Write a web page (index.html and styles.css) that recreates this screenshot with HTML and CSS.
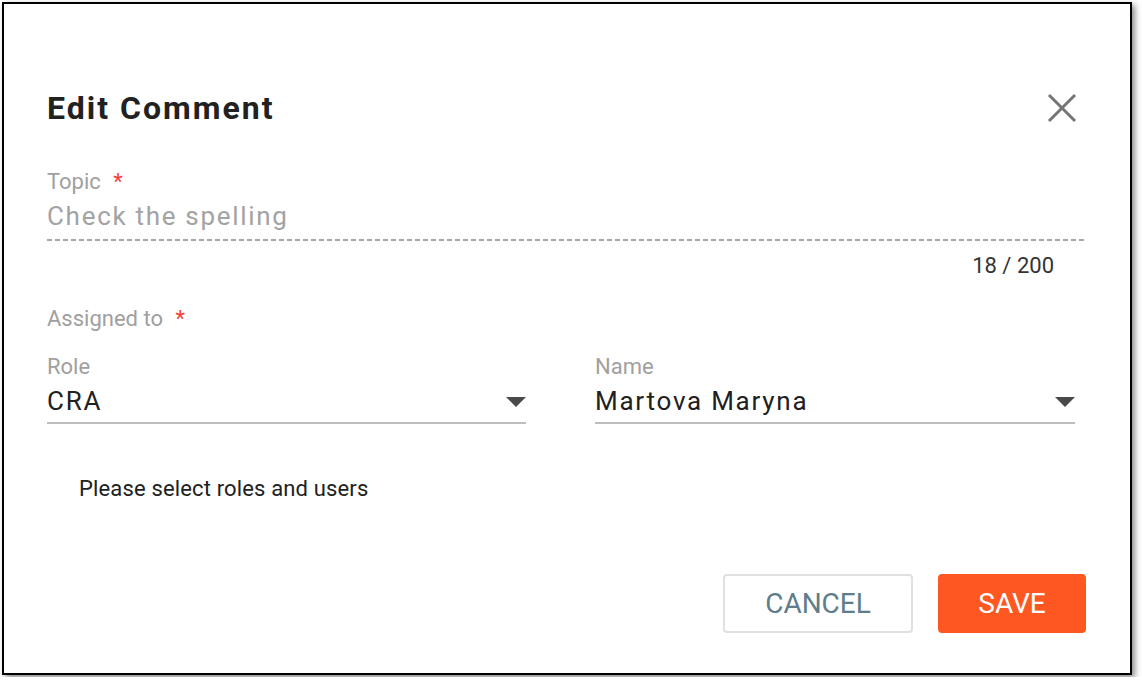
FILE: index.html
```html
<!DOCTYPE html>
<html lang="en">
<head>
<meta charset="utf-8">
<title>Edit Comment</title>
<link rel="stylesheet" href="styles.css">
</head>
<body>
<div class="dialog">
  <div class="header">
    <h1 class="title">Edit Comment</h1>
    <button class="close" aria-label="Close">
      <svg width="48" height="48" viewBox="0 0 48 48"><path d="M11 11L37 37M37 11L11 37" stroke="#757575" stroke-width="3" fill="none"/></svg>
    </button>
  </div>

  <div class="topic">
    <div class="label">Topic <span class="req">*</span></div>
    <div class="topic-value">Check the spelling</div>
    <div class="dash"></div>
    <div class="counter">18 / 200</div>
  </div>

  <div class="label assigned">Assigned to <span class="req">*</span></div>

  <div class="selects">
    <div class="select">
      <div class="label">Role</div>
      <div class="select-value">
        <span>CRA</span>
        <svg class="arrow" width="20" height="10" viewBox="0 0 20 10"><path d="M0 0L10 10L20 0Z" fill="#4a4a4a"/></svg>
      </div>
    </div>
    <div class="select">
      <div class="label">Name</div>
      <div class="select-value">
        <span>Martova Maryna</span>
        <svg class="arrow" width="20" height="10" viewBox="0 0 20 10"><path d="M0 0L10 10L20 0Z" fill="#4a4a4a"/></svg>
      </div>
    </div>
  </div>

  <div class="hint">Please select roles and users</div>

  <div class="actions">
    <button class="btn btn-cancel">CANCEL</button>
    <button class="btn btn-save">SAVE</button>
  </div>
</div>
</body>
</html>
```

FILE: styles.css
```css
html, body {
  margin: 0;
  background: #ffffff;
}
body {
  padding: 2px;
  font-family: Roboto, "Liberation Sans", Arial, sans-serif;
  color: #212121;
}
.dialog {
  width: 1130px;
  height: 673px;
  box-sizing: border-box;
  border: 2px solid #000;
  box-shadow: 3px 3px 6px rgba(0, 0, 0, 0.45);
  background: #fff;
  padding: 80px 44px 40px 43px;
  display: flex;
  flex-direction: column;
}
.header {
  display: flex;
  justify-content: space-between;
  align-items: center;
  height: 48px;
}
.title {
  margin: 0;
  font-size: 32px;
  line-height: 48px;
  font-weight: 700;
  letter-spacing: 2px;
  color: #212121;
}
.close {
  width: 48px;
  height: 48px;
  padding: 0;
  border: 0;
  background: none;
  display: block;
}
.close svg { display: block; }
.label {
  font-size: 22px;
  line-height: 24px;
  color: #a0a0a0;
}
.req {
  color: #f44336;
  margin-left: 7px;
}
.topic { margin-top: 38px; }
.topic-value {
  margin-top: 6px;
  font-size: 26px;
  line-height: 32px;
  color: #a3a3a3;
  padding-bottom: 7px;
  letter-spacing: 1.7px;
}
.dash {
  height: 2px;
  background-image: repeating-linear-gradient(to right, #a8a8a8 0 5px, transparent 5px 8px);
}
.counter {
  margin-top: 13px;
  font-size: 22px;
  line-height: 24px;
  color: #333;
  text-align: right;
  padding-right: 32px;
}
.assigned { margin-top: 29px; }
.selects {
  margin-top: 24px;
  display: grid;
  grid-template-columns: 479px 480px;
  column-gap: 69px;
}
.select-value {
  margin-top: 6px;
  font-size: 26px;
  line-height: 32px;
  color: #212121;
  padding-bottom: 5px;
  border-bottom: 2px solid #bdbdbd;
  display: flex;
  justify-content: space-between;
  align-items: center;
  letter-spacing: 1.75px;
}
.arrow { display: block; margin-top: 2px; }
.hint {
  margin-top: 53px;
  padding-left: 32px;
  font-size: 22px;
  line-height: 24px;
  color: #212121;
  letter-spacing: 0.15px;
}
.actions {
  margin-top: 73px;
  display: flex;
  justify-content: flex-end;
  gap: 25px;
}
.btn {
  height: 59px;
  font-family: Roboto, "Liberation Sans", Arial, sans-serif;
  font-size: 28px;
  font-weight: 400;
  border-radius: 4px;
  padding: 0;
  cursor: pointer;
}
.btn-cancel {
  width: 190px;
  background: #fff;
  border: 2px solid #e0e0e0;
  color: #607d8b;
}
.btn-save {
  width: 148px;
  background: #ff5722;
  border: 0;
  color: #fff;
}
```
